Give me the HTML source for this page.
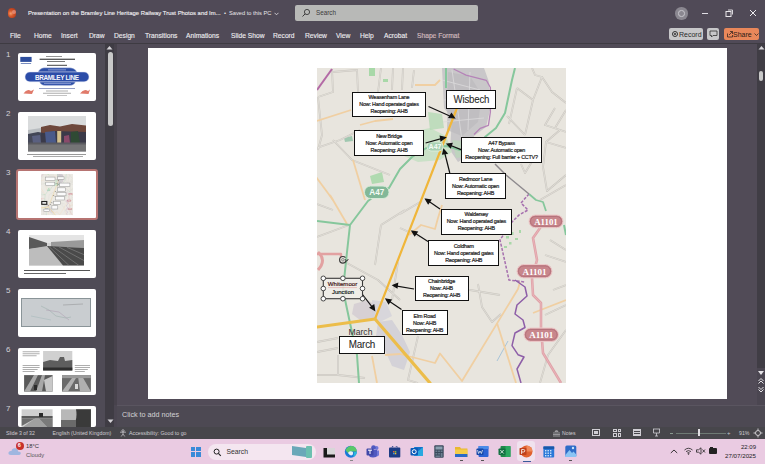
<!DOCTYPE html>
<html><head><meta charset="utf-8">
<style>
*{margin:0;padding:0;box-sizing:border-box}
html,body{width:765px;height:464px;overflow:hidden;background:#4b4651;font-family:"Liberation Sans",sans-serif}
.a{position:absolute}
.t{position:absolute;white-space:pre;line-height:1}
#title{left:0;top:0;width:765px;height:43px;background:#504a57}
#rline{left:0;top:42.8px;width:765px;height:1.7px;background:#3e3b42}
#lp{left:0;top:44px;width:105px;height:383px;background:#4f4b56}
#sbtrack{left:105px;top:44px;width:9px;height:383px;background:#3f3c44}
#sbthumb{left:107.5px;top:52px;width:5px;height:74px;background:#c9c9c9;border-radius:3px}
#sep{left:114px;top:44px;width:3px;height:361px;background:#47424c}
#work{left:117px;top:44px;width:640px;height:361px;background:#514b57}
#rsb{left:757px;top:44px;width:8px;height:324px;background:#403d45}
#slide{left:147.6px;top:47.5px;width:579.2px;height:351.6px;background:#fff}
#notes{left:117px;top:404.5px;width:648px;height:22.5px;background:#4d4953;border-top:1px solid #5a5560}
#status{left:0;top:427px;width:765px;height:12px;background:#47464b}
#task{left:0;top:439px;width:765px;height:25px;background:#eacbe2}
.thumb{position:absolute;left:18px;width:78px;height:48px;background:#fff;border-radius:2px}
.num{position:absolute;left:6px;color:#d4d2d8;font-size:8px;line-height:1}
.menu{position:absolute;top:33px;color:#eeedf0;font-size:6.7px;white-space:pre;line-height:1;-webkit-text-stroke:0.12px #eeedf0}
.bx{position:absolute;background:#fff;border:1.8px solid #111;padding-top:0.8px;display:flex;align-items:center;justify-content:center;text-align:center;font-size:5.4px;letter-spacing:-0.2px;line-height:7px;color:#1a1a1a;white-space:nowrap;-webkit-text-stroke:0.2px #222}
.bx.big{color:#262626;line-height:1;-webkit-text-stroke:0.08px #262626;padding-top:0}
</style></head>
<body>
<div class="a" id="title"></div>
<div class="a" id="rline"></div>
<div class="a" id="lp"></div>
<div class="a" id="sbtrack"></div>
<div class="a" id="sbthumb"></div>
<div class="a" id="sep"></div>
<div class="a" id="work"></div>
<div class="a" id="rsb"></div>
<div class="a" id="slide"></div>
<div class="a" id="notes"></div>
<div class="a" id="status"></div>
<div class="a" id="task"></div>

<!-- title bar -->
<div class="a" style="left:7.8px;top:8.3px;width:8.4px;height:9.6px;border-radius:45%;background:radial-gradient(circle at 35% 55%,#f4a070 0,#d85a2c 35%,#b8401e 70%,#8a3a38 100%)"></div><div class="a" style="left:11.5px;top:9.5px;width:4px;height:4px;border-radius:50%;background:#e89888;opacity:.7"></div>
<div class="t" style="left:28px;top:10.6px;font-size:5.9px;color:#f0eff2;-webkit-text-stroke:0.12px #f0eff2">Presentation on the Bramley Line Heritage Railway Trust Photos and Im...</div>
<div class="t" style="left:224px;top:10.8px;font-size:5.9px;color:#e8e6ea">•</div><div class="t" style="left:229px;top:11px;font-size:5.7px;color:#e8e6ea">Saved to this PC</div><svg class="a" style="left:274px;top:12px" width="5" height="4"><path d="M0.5 0.8 L2.5 2.8 L4.5 0.8" fill="none" stroke="#e8e6ea" stroke-width="0.8"/></svg>
<div class="a" style="left:295px;top:5px;width:183px;height:16px;background:#b8b9b7;border-radius:2px"></div>
<div class="t" style="left:316px;top:9.5px;font-size:6.3px;color:#3a3a3a">Search</div>

<!-- menu -->
<div class="menu" style="left:10px">File</div>
<div class="menu" style="left:34px">Home</div>
<div class="menu" style="left:61px">Insert</div>
<div class="menu" style="left:89px">Draw</div>
<div class="menu" style="left:114px">Design</div>
<div class="menu" style="left:145px">Transitions</div>
<div class="menu" style="left:186px">Animations</div>
<div class="menu" style="left:231px">Slide Show</div>
<div class="menu" style="left:273px">Record</div>
<div class="menu" style="left:305px">Review</div>
<div class="menu" style="left:336px">View</div>
<div class="menu" style="left:360px">Help</div>
<div class="menu" style="left:384px">Acrobat</div>
<div class="menu" style="left:417px;color:#c9a3a8">Shape Format</div>

<!-- thumbs -->
<div class="thumb" style="top:53px"></div>
<div class="thumb" style="top:112px"></div>
<div class="thumb" style="top:168.5px;left:16.2px;width:81.8px;height:51.8px;border:2px solid #b67472;border-radius:3px"></div>
<div class="thumb" style="top:230px"></div>
<div class="thumb" style="top:289px"></div>
<div class="thumb" style="top:348px;height:46.5px"></div>
<div class="thumb" style="top:406px;height:21px"></div>

<!-- map -->
<!-- thumb contents -->
<div class="num" style="top:51.3px">1</div>
<div class="num" style="top:110.3px">2</div>
<div class="num" style="top:169.3px">3</div>
<div class="num" style="top:228.3px">4</div>
<div class="num" style="top:287.3px">5</div>
<div class="num" style="top:346.3px">6</div>
<div class="num" style="top:405.3px">7</div>
<!-- t1 -->
<svg class="a" style="left:18px;top:53px" width="78" height="48" viewBox="18 53 78 48">
<rect x="20.3" y="56.9" width="11.3" height="5" fill="#2e4e9e"/>
<rect x="20.8" y="63" width="10.3" height="0.9" fill="#6a80b8"/>
<rect x="46" y="56.2" width="16" height="0.7" fill="#666"/>
<rect x="39.6" y="58.7" width="35.4" height="1.1" fill="#333"/>
<rect x="47" y="61" width="18" height="0.8" fill="#555"/>
<rect x="47" y="64.8" width="20" height="1" fill="#444"/>
<path d="M38 72 Q40 68 44 67.8 L70 67.8 Q75 68 77 72 Z" fill="#2d4ea6" stroke="#d8ddf0" stroke-width="0.4"/>
<path d="M39.5 81.8 L75.5 81.8 Q74 85.6 70 85.6 L45 85.6 Q41 85.6 39.5 81.8 Z" fill="#2d4ea6" stroke="#d8ddf0" stroke-width="0.4"/>
<rect x="25" y="72" width="64" height="9.8" rx="4.9" fill="#2b4ca8" stroke="#d8ddf0" stroke-width="0.5"/>
<rect x="48" y="69.4" width="18" height="0.9" fill="#8fa0d8"/>
<rect x="44" y="83.2" width="27" height="0.9" fill="#8fa0d8"/>
<text x="57" y="79.9" font-family="Liberation Sans" font-weight="bold" font-size="6.4" fill="#f4f6fc" text-anchor="middle" textLength="44">BRAMLEY LINE</text>
<rect x="39" y="88.2" width="36" height="0.8" fill="#7a88b8"/>
<rect x="46" y="90.6" width="22" height="0.8" fill="#999"/>
<rect x="43" y="92.8" width="28" height="0.8" fill="#999"/>
<rect x="47" y="95" width="20" height="0.7" fill="#aaa"/>
<path d="M23.5 93.5 Q27 88 31 91 L34 89.5 L32 94 Z" fill="#e07a6a"/>
<path d="M80 93.5 Q84 88 88 91 L90 89.5 L88.5 94 Z" fill="#e07a6a"/>
</svg>
<!-- t2 photo -->
<svg class="a" style="left:28px;top:116px" width="58.4" height="35.6" viewBox="0 0 58.4 35.6">
<rect width="58.4" height="35.6" fill="#d9dbdc"/>
<path d="M13 11 L22 9 L32 10.5 L44 8 L58.4 9.5 L58.4 27 L13 27 Z" fill="#6e483c"/>
<path d="M0 14 L13 12 L13 20 L0 20 Z" fill="#b8bcc0"/>
<path d="M0 18 L10 16 L16 17 L26 15 L58.4 16 L58.4 28 L0 28 Z" fill="#35384a" opacity="0.9"/>
<path d="M17 16 L27 15 L28 27 L18 27 Z" fill="#4a5a8a"/>
<path d="M4 20 L12 19 L13 27 L5 27 Z" fill="#5a6080"/>
<rect x="29.2" y="15" width="4" height="13" fill="#d4c08c"/>
<path d="M36 20 L41 19 L42 27 L36 27 Z" fill="#8a4a6a"/>
<path d="M43 16 L50 15 L52 27 L43 27 Z" fill="#2f4a34"/>
<rect x="0" y="28" width="58.4" height="7.6" fill="#747476"/>
<rect x="0" y="26.5" width="58.4" height="2" fill="#5a5a60"/>
</svg>
<div class="a" style="left:27px;top:153.5px;width:59px;height:0.8px;background:#999"></div>
<div class="a" style="left:33px;top:155.5px;width:50px;height:0.8px;background:#aaa"></div>
<!-- t3 map -->
<svg class="a" style="left:41.2px;top:174.4px" width="32" height="41.3" viewBox="317 68 249 315" preserveAspectRatio="none"><use href="#mapg" opacity="0.8"/><rect x="352.0" y="91.5" width="74.0" height="25.0" fill="#fbfbfb" stroke="#999" stroke-width="4"/><rect x="354.0" y="130.3" width="70.2" height="26.0" fill="#fbfbfb" stroke="#999" stroke-width="4"/><rect x="461.4" y="137.2" width="80.4" height="25.5" fill="#fbfbfb" stroke="#999" stroke-width="4"/><rect x="445.4" y="173.4" width="60.4" height="26.0" fill="#fbfbfb" stroke="#999" stroke-width="4"/><rect x="441.1" y="208.5" width="70.5" height="26.0" fill="#fbfbfb" stroke="#999" stroke-width="4"/><rect x="428.2" y="240.2" width="71.1" height="26.0" fill="#fbfbfb" stroke="#999" stroke-width="4"/><rect x="414.5" y="275.5" width="54.0" height="25.0" fill="#fbfbfb" stroke="#999" stroke-width="4"/><rect x="401.6" y="310.2" width="46.0" height="25.0" fill="#fbfbfb" stroke="#999" stroke-width="4"/><rect x="446.3" y="89.8" width="50.2" height="19.0" fill="#fbfbfb" stroke="#999" stroke-width="4"/><rect x="339.4" y="335.7" width="45.4" height="18.7" fill="#fbfbfb" stroke="#999" stroke-width="4"/><rect x="323" y="278" width="39" height="21" fill="#fff" stroke="#222" stroke-width="9"/></svg>
<!-- t4 -->
<svg class="a" style="left:28.6px;top:235.4px" width="55.8" height="30.5" viewBox="0 0 55.8 30.5">
<rect width="55.8" height="30.5" fill="#d4d4d4"/>
<rect width="55.8" height="8" fill="#e4e4e4"/>
<path d="M0 2 L18 8 L18 12 L0 14 Z" fill="#5a5a5a"/>
<path d="M22 7 L55.8 5 L55.8 13 L22 12 Z" fill="#9a9a9a"/>
<path d="M0 14 L18 11 L34 30.5 L0 30.5 Z" fill="#bdbdbd"/>
<path d="M18 11 L55.8 13 L55.8 30.5 L34 30.5 Z" fill="#4a4a4a"/>
<path d="M20 11.5 L40 30.5 M24 11.8 L50 30.5 M30 12 L55.8 26 M38 12.4 L55.8 20" stroke="#8a8a8a" stroke-width="0.6"/>
</svg>
<div class="a" style="left:24px;top:269.5px;width:66px;height:1px;background:#555"></div>
<div class="a" style="left:24px;top:273px;width:42px;height:1px;background:#666"></div>
<!-- t5 -->
<div class="a" style="left:20.5px;top:298px;width:70.8px;height:28.6px;background:#c9cdd0;border:0.6px solid #8a9498"></div>
<svg class="a" style="left:20.5px;top:298px" width="70.8" height="28.6"><g fill="none" stroke-width="0.5" opacity="0.6"><path d="M20 8 L28 12 L35 18 L45 20 L50 19" stroke="#7a9a90"/><path d="M25 12 L38 14 L48 22" stroke="#9a7a9a"/><path d="M42 7 L62 6" stroke="#666"/><path d="M10 18 L30 22" stroke="#8aa"/></g></svg>
<!-- t6 -->
<svg class="a" style="left:18px;top:348px" width="78" height="79" viewBox="18 348 78 79">
<g fill="#9a9a9a"><rect x="22.6" y="351.4" width="17" height="0.8"/><rect x="22.6" y="353.4" width="17" height="0.8"/><rect x="22.6" y="355.4" width="14" height="0.8"/>
<rect x="22.6" y="365" width="17" height="0.8"/><rect x="22.6" y="367" width="17" height="0.8"/><rect x="22.6" y="369" width="15" height="0.8"/><rect x="22.6" y="371" width="12" height="0.8"/>
<rect x="74.8" y="365" width="15.2" height="0.8"/><rect x="74.8" y="367" width="15.2" height="0.8"/><rect x="74.8" y="369" width="13" height="0.8"/><rect x="74.8" y="371" width="10" height="0.8"/></g>
<rect x="43.1" y="351" width="29.2" height="19.4" fill="#d0d0d0"/>
<path d="M43.1 362 L50 360 L58 361 L60 357 L64 357 L65 361 L72.3 360 L72.3 370.4 L43.1 370.4 Z" fill="#5e5e5e"/>
<rect x="43.1" y="367.5" width="29.2" height="2.9" fill="#2e2e2e"/>
<rect x="24.1" y="375.1" width="28.5" height="16.5" fill="#5a5a5a"/>
<path d="M24.1 391.6 L34 375.1 L38 375.1 L30 391.6 Z M36 391.6 L42 375.1 L45 375.1 L42 391.6 Z" fill="#a8a8a8"/>
<path d="M44 380 L52.6 376 L52.6 391.6 L46 391.6 Z" fill="#c8c8c8"/>
<rect x="34" y="385" width="3" height="5" fill="#2a2a2a"/>
<rect x="62" y="375.1" width="28.9" height="16.5" fill="#6a6a6a"/>
<path d="M62 391.6 L72 378 L76 378 L68 391.6 Z M80 391.6 L78 376 L82 376 L90.9 391.6 Z" fill="#b0b0b0"/>
<rect x="75" y="384" width="3" height="5" fill="#dadada"/>
<rect x="62" y="375.1" width="28.9" height="3" fill="#9a9a9a"/>
<!-- t7 -->
<rect x="21.6" y="409.3" width="31" height="20" fill="#cfcfcf"/>
<rect x="21.6" y="416" width="31" height="2.5" fill="#5a5a5a"/>
<rect x="39" y="413" width="4" height="4" fill="#2a2a2a"/>
<path d="M21.6 428 L35 418.5 L39 418.5 L48 428 Z" fill="#a0a0a0"/>
<path d="M21.6 418.5 L35 418.5 L21.6 426 Z" fill="#6e6e6e"/>
<path d="M39 418.5 L52.6 418.5 L52.6 428 L48 428 Z" fill="#7a7a7a"/>
<rect x="61" y="409.3" width="29.9" height="20" fill="#b8b8b8"/>
<path d="M76 409.3 L90.9 409.3 L90.9 428 L72 428 Q78 420 76 409.3 Z" fill="#3a3a3a"/>
<rect x="61" y="420" width="15" height="8" fill="#6a6a6a"/>
</svg>
<!-- title right controls -->
<div class="a" style="left:675px;top:7px;width:12.5px;height:12.5px;border-radius:50%;background:#8a8790"></div>
<div class="a" style="left:678px;top:10px;width:6.5px;height:6.5px;border-radius:50%;border:1px solid #c8c6cc"></div>
<div class="a" style="left:701.5px;top:12.8px;width:6.5px;height:1px;background:#e0dee4"></div>
<svg class="a" style="left:725px;top:9px" width="9" height="9"><rect x="1" y="2.5" width="5" height="5" fill="none" stroke="#e8e6ea" stroke-width="1"/><path d="M3 1 L7.5 1 L7.5 5.5" fill="none" stroke="#e8e6ea" stroke-width="0.9"/></svg>
<svg class="a" style="left:749px;top:9px" width="8" height="8"><path d="M1 1 L7 7 M7 1 L1 7" stroke="#ecebee" stroke-width="1"/></svg>
<!-- search icon -->
<svg class="a" style="left:301px;top:8px" width="10" height="10"><circle cx="6" cy="4" r="2.6" fill="none" stroke="#3a3a3a" stroke-width="0.9"/><path d="M4.2 5.8 L1.5 8.5" stroke="#3a3a3a" stroke-width="1"/></svg>
<!-- record/comment/share -->
<div class="a" style="left:669px;top:28px;width:34px;height:12px;background:#c7c7c9;border-radius:2px"></div>
<div class="a" style="left:672px;top:31px;width:6px;height:6px;border-radius:50%;border:1px solid #333"></div>
<div class="a" style="left:674px;top:33px;width:2px;height:2px;border-radius:50%;background:#333"></div>
<div class="t" style="left:679px;top:31px;font-size:7px;color:#2a2a2a">Record</div>
<div class="a" style="left:707px;top:28px;width:12px;height:12px;background:#c7c7c9;border-radius:2px"></div>
<svg class="a" style="left:709px;top:30px" width="9" height="8"><path d="M1 1 L8 1 L8 5.5 L4 5.5 L2.5 7 L2.5 5.5 L1 5.5 Z" fill="none" stroke="#333" stroke-width="0.8"/></svg>
<div class="a" style="left:723.5px;top:28px;width:35.5px;height:12px;background:#e8875a;border-radius:2px"></div>
<svg class="a" style="left:726px;top:30px" width="8" height="8"><path d="M1.5 3.5 L1.5 7 L6.5 7 L6.5 5 M3 5 L6.5 1.5 M4 1.5 L6.5 1.5 L6.5 4" fill="none" stroke="#3a2a22" stroke-width="0.8"/></svg>
<div class="t" style="left:733px;top:31px;font-size:7px;color:#2a1a14">Share</div>
<svg class="a" style="left:754px;top:33px" width="5" height="3"><path d="M0.5 0.5 L2.5 2.5 L4.5 0.5" fill="none" stroke="#3a2a22" stroke-width="0.8"/></svg>
<!-- scroll arrows -->
<svg class="a" style="left:106px;top:45px" width="7" height="5"><path d="M0.5 4.5 L3.5 1 L6.5 4.5 Z" fill="#d6d4d8"/></svg>
<svg class="a" style="left:107px;top:419px" width="7" height="5"><path d="M0.5 0.5 L3.5 4 L6.5 0.5 Z" fill="#d6d4d8"/></svg>
<div class="a" style="left:759px;top:71px;width:4px;height:10px;background:#c9c9c9;border-radius:2px"></div>
<svg class="a" style="left:758px;top:45px" width="7" height="5"><path d="M0.5 4.5 L3.5 1 L6.5 4.5 Z" fill="#d6d4d8"/></svg>
<!-- status bar texts -->
<div class="t" style="left:6px;top:430.5px;font-size:5.2px;color:#cfcdd2">Slide 3 of 32</div>
<div class="t" style="left:52.5px;top:430.5px;font-size:5.2px;color:#cfcdd2">English (United Kingdom)</div>
<svg class="a" style="left:119px;top:428.5px" width="8" height="8"><circle cx="4" cy="1.8" r="1.1" fill="none" stroke="#d0ced4" stroke-width="0.7"/><path d="M1 3.2 L7 3.2 M4 3.2 L4 5 L2.2 7.5 M4 5 L5.8 7.5" fill="none" stroke="#d0ced4" stroke-width="0.7"/></svg>
<div class="t" style="left:129px;top:430.5px;font-size:5.25px;color:#cfcdd2">Accessibility: Good to go</div>
<svg class="a" style="left:552px;top:428.5px" width="9" height="8"><path d="M4.5 1 L6 2.5 L3 2.5 Z M1 4 L8 4 M1 5.5 L8 5.5 M1 7 L8 7" fill="none" stroke="#cfcdd2" stroke-width="0.6"/></svg>
<div class="t" style="left:562px;top:430.5px;font-size:5.2px;color:#cfcdd2">Notes</div>
<div class="a" style="left:592px;top:428.5px;width:8px;height:7.5px;border:1px solid #d0ced4"></div>
<div class="a" style="left:594px;top:430.5px;width:4px;height:3px;background:#d0ced4"></div>
<div class="a" style="left:613px;top:428.5px;width:3.5px;height:3.5px;border:0.8px solid #d0ced4"></div>
<div class="a" style="left:617.5px;top:428.5px;width:3.5px;height:3.5px;border:0.8px solid #d0ced4"></div>
<div class="a" style="left:613px;top:433px;width:3.5px;height:3.5px;border:0.8px solid #d0ced4"></div>
<div class="a" style="left:617.5px;top:433px;width:3.5px;height:3.5px;border:0.8px solid #d0ced4"></div>
<div class="a" style="left:633px;top:428.5px;width:8px;height:7.5px;border:1px solid #d0ced4;background:repeating-linear-gradient(#d0ced4 0 1px,transparent 1px 2px)"></div>
<svg class="a" style="left:652px;top:428px" width="9" height="9"><path d="M1 1 L8 1 M1.5 1 L1.5 5 L7.5 5 L7.5 1 M4.5 5 L4.5 8 M3 8 L6 8" fill="none" stroke="#d0ced4" stroke-width="0.8"/></svg>
<div class="a" style="left:670px;top:433px;width:3px;height:0.8px;background:#8a9a90"></div>
<div class="a" style="left:676px;top:433px;width:50px;height:0.8px;background:#6e7a74"></div>
<div class="a" style="left:697.5px;top:429px;width:2px;height:7px;background:#e0dee2"></div>
<div class="t" style="left:727px;top:429.5px;font-size:6px;color:#c8c6cc">+</div>
<div class="t" style="left:739px;top:430.5px;font-size:5.2px;color:#cfcdd2">91%</div>
<svg class="a" style="left:753px;top:428px" width="10" height="10"><circle cx="5" cy="5" r="2.5" fill="none" stroke="#d8d6da" stroke-width="0.9"/><path d="M5 0.5 L5 2.5 M5 7.5 L5 9.5 M0.5 5 L2.5 5 M7.5 5 L9.5 5" stroke="#d8d6da" stroke-width="0.9"/></svg>
<!-- taskbar -->
<svg class="a" style="left:8px;top:445px" width="14" height="12"><path d="M3 10 Q0 10 0.5 7.5 Q1 5.5 3.5 6 Q4 3 7 3.2 Q10 3.4 10 6.5 Q13 6.5 12.8 8.5 Q12.5 10 10.5 10 Z" fill="#9fb6e0"/></svg>
<div class="a" style="left:15.5px;top:441.5px;width:8px;height:8px;border-radius:50%;background:#c8302a"></div>
<div class="t" style="left:17.7px;top:443px;font-size:5.5px;color:#fff;font-weight:bold">6</div>
<div class="t" style="left:26px;top:444px;font-size:5.8px;color:#333">18°C</div>
<div class="t" style="left:26px;top:452.5px;font-size:5.8px;color:#555">Cloudy</div>
<!-- windows logo -->
<div class="a" style="left:190.5px;top:446.5px;width:4.6px;height:4.6px;background:#3a8ad8"></div>
<div class="a" style="left:196.4px;top:446.5px;width:4.6px;height:4.6px;background:#3a8ad8"></div>
<div class="a" style="left:190.5px;top:452.4px;width:4.6px;height:4.6px;background:#3a8ad8"></div>
<div class="a" style="left:196.4px;top:452.4px;width:4.6px;height:4.6px;background:#3a8ad8"></div>
<!-- search -->
<div class="a" style="left:208px;top:444px;width:108px;height:16px;background:#f4e6f0;border-radius:8px"></div>
<svg class="a" style="left:213px;top:448px" width="9" height="9"><circle cx="3.6" cy="3.6" r="2.5" fill="none" stroke="#222" stroke-width="1"/><path d="M5.4 5.4 L7.8 7.8" stroke="#222" stroke-width="1.1"/></svg>
<div class="t" style="left:226.5px;top:448.5px;font-size:6.8px;color:#333">Search</div>
<div class="a" style="left:292px;top:447px;width:14px;height:9px;background:#6aa8b8;transform:skewY(8deg)"></div>
<div class="a" style="left:306px;top:446px;width:6px;height:12px;background:#6cc0b0;border-radius:1px"></div>
<!-- app icons -->
<svg class="a" style="left:323px;top:448px" width="13" height="10"><rect x="0.5" y="0" width="11.5" height="9.5" fill="#1a1a1a"/><rect x="4" y="0" width="8" height="6.5" fill="#d8d6d8"/></svg>
<svg class="a" style="left:344px;top:445px" width="14" height="14"><circle cx="6.8" cy="6.8" r="6" fill="#1a78d8"/><path d="M1.5 5 Q4 0.5 8 1 Q12.5 1.5 12.8 6.5 L7 6.5 Q5 6.5 4.5 8.5 Q3 7 1.5 5 Z" fill="#5ac86a"/><path d="M4 8 Q5 5.5 8 6.5 Q10 7 8.5 10 Q6 11.5 4 8 Z" fill="#e8eef6"/><path d="M9 12 Q12.5 10.5 12.8 7 L10 7 Q10 10 9 12 Z" fill="#2ab8d8"/></svg>
<div class="a" style="left:350px;top:459.5px;width:3px;height:1px;background:#888"></div>
<svg class="a" style="left:366px;top:445px" width="14" height="13"><circle cx="10.5" cy="3" r="2" fill="#7078d8"/><path d="M8 5.5 L13 5.5 L13 9.5 Q13 11.5 10.5 11.5 Q8 11.5 8 9.5 Z" fill="#7078d8"/><circle cx="7.5" cy="2.5" r="2.3" fill="#5059c0"/><path d="M3 5 L11 5 L11 10 Q11 12.5 7 12.5 Q3 12.5 3 10 Z" fill="#5059c0"/><rect x="0.5" y="3.5" width="7" height="7" rx="1" fill="#4048a8"/><path d="M2 5.2 L6 5.2 M4 5.2 L4 9" stroke="#fff" stroke-width="1"/></svg>
<svg class="a" style="left:389px;top:446px" width="12" height="12"><rect x="0" y="1.5" width="11.3" height="10" rx="1" fill="#1c3c84"/><path d="M3 1.5 Q3 -0.5 5.6 -0.5 Q8.3 -0.5 8.3 1.5" fill="none" stroke="#1c3c84" stroke-width="0.8"/><rect x="4" y="5" width="1.5" height="1.5" fill="#e85a30"/><rect x="5.8" y="5" width="1.5" height="1.5" fill="#6ac04a"/><rect x="4" y="6.8" width="1.5" height="1.5" fill="#3a9ae0"/><rect x="5.8" y="6.8" width="1.5" height="1.5" fill="#f0c02a"/></svg>
<svg class="a" style="left:410px;top:445px" width="14" height="13"><path d="M4 2 L13 2 L13 11 L4 11 Z" fill="#28a8e0"/><path d="M4 2 L13 2 L8.5 6 Z" fill="#1470c8"/><rect x="0.5" y="3" width="7.5" height="7.5" rx="1" fill="#0a5ab8"/><circle cx="4.2" cy="6.7" r="2" fill="none" stroke="#fff" stroke-width="1"/></svg>
<svg class="a" style="left:433.5px;top:445px" width="10" height="13"><rect x="0.3" y="0.3" width="9.4" height="12.5" rx="1" fill="#3a4a5c"/><rect x="1.5" y="1.5" width="7" height="3" fill="#8aa0b0"/><g fill="#6a7e90"><rect x="1.5" y="5.5" width="1.8" height="1.5"/><rect x="4.1" y="5.5" width="1.8" height="1.5"/><rect x="6.7" y="5.5" width="1.8" height="1.5"/><rect x="1.5" y="8" width="1.8" height="1.5"/><rect x="4.1" y="8" width="1.8" height="1.5"/><rect x="6.7" y="8" width="1.8" height="4"/><rect x="1.5" y="10.5" width="4.4" height="1.5"/></g></svg>
<svg class="a" style="left:455px;top:446px" width="13" height="12"><path d="M0 1 L5 1 L6 2.5 L12.4 2.5 L12.4 11 L0 11 Z" fill="#e8b830"/><rect x="0" y="3.5" width="12.4" height="7.5" fill="#f4cc48"/><rect x="0" y="8" width="12.4" height="3" fill="#2a6ac8"/></svg>
<div class="a" style="left:459.5px;top:460px;width:3px;height:1px;background:#555"></div>
<svg class="a" style="left:476px;top:445px" width="13" height="13"><rect x="2.5" y="1" width="10" height="11" rx="1" fill="#2b62d4"/><rect x="2.5" y="1" width="10" height="3" fill="#4a8ae8"/><rect x="0.5" y="3.5" width="7" height="6.5" rx="0.8" fill="#1648a8"/><path d="M1.5 5 L2.6 8.5 L4 6 L5.4 8.5 L6.5 5" fill="none" stroke="#fff" stroke-width="0.7"/></svg>
<div class="a" style="left:480.5px;top:460px;width:3px;height:1px;background:#555"></div>
<svg class="a" style="left:497.5px;top:445px" width="13" height="13"><rect x="2.5" y="1" width="10" height="11" rx="1" fill="#1f8a4a"/><rect x="7.5" y="1" width="5" height="11" fill="#2aa860"/><rect x="0.5" y="3.5" width="7" height="6.5" rx="0.8" fill="#107040"/><path d="M2.3 5 L5.7 8.5 M5.7 5 L2.3 8.5" stroke="#fff" stroke-width="0.8"/></svg>
<div class="a" style="left:516.8px;top:441.4px;width:18.7px;height:20px;background:#f0e2ee;border-radius:3px"></div>
<svg class="a" style="left:518.5px;top:445px" width="14" height="13"><circle cx="7.5" cy="6.5" r="6" fill="#e0602e"/><path d="M7.5 0.5 A6 6 0 0 1 13.5 6.5 L7.5 6.5 Z" fill="#f08a5a"/><rect x="0.5" y="3" width="7" height="7" rx="0.8" fill="#c0401a"/><path d="M2.6 9 L2.6 4.5 L4.5 4.5 Q5.8 4.5 5.8 5.8 Q5.8 7 4.5 7 L2.6 7" fill="none" stroke="#fff" stroke-width="0.8"/></svg>
<div class="a" style="left:522.5px;top:460.5px;width:8px;height:1.2px;background:#3a5a9a"></div>
<svg class="a" style="left:543px;top:445.5px" width="12" height="12"><rect x="0.4" y="0.4" width="10.8" height="11.2" rx="1" fill="#2a78d8"/><rect x="0.4" y="0.4" width="10.8" height="2.5" fill="#1a58a8"/><g fill="#d0e4fa"><rect x="2" y="4" width="1.4" height="1.4"/><rect x="4.5" y="4" width="1.4" height="1.4"/><rect x="7" y="4" width="1.4" height="1.4"/><rect x="2" y="6.5" width="1.4" height="1.4"/><rect x="4.5" y="6.5" width="1.4" height="1.4"/><rect x="7" y="6.5" width="1.4" height="1.4"/><rect x="2" y="9" width="1.4" height="1.4"/><rect x="4.5" y="9" width="1.4" height="1.4"/><rect x="7" y="9" width="1.4" height="1.4"/></g></svg>
<svg class="a" style="left:564.5px;top:445px" width="12" height="13"><rect x="0.3" y="0.5" width="11" height="11.5" rx="1.5" fill="#2e6cc8"/><path d="M0.3 10 L4.5 5 L7 8 L8.5 6.5 L11.3 9.5 L11.3 12 L0.3 12 Z" fill="#8ac4f4"/><circle cx="8" cy="3" r="1.2" fill="#c8e4fa"/></svg>
<div class="a" style="left:568.5px;top:460px;width:3px;height:1px;background:#555"></div>
<!-- tray -->
<svg class="a" style="left:670px;top:449px" width="8" height="5"><path d="M0.8 4 L4 1 L7.2 4" fill="none" stroke="#222" stroke-width="0.9"/></svg>
<svg class="a" style="left:684px;top:447px" width="9" height="8"><path d="M0.5 3 Q4.5 -0.5 8.5 3 M2 4.6 Q4.5 2.6 7 4.6 M3.3 6 Q4.5 5 5.7 6" fill="none" stroke="#222" stroke-width="0.8"/><circle cx="4.5" cy="7" r="0.7" fill="#222"/></svg>
<svg class="a" style="left:696px;top:447px" width="10" height="8"><path d="M0.5 2.8 L2.5 2.8 L5 0.8 L5 7.2 L2.5 5.2 L0.5 5.2 Z" fill="none" stroke="#222" stroke-width="0.8"/><path d="M6.5 2.5 L9 5.5 M9 2.5 L6.5 5.5" stroke="#222" stroke-width="0.8"/></svg>
<div class="a" style="left:708.5px;top:448px;width:8px;height:6px;background:#222;border-radius:1px"></div>
<div class="a" style="left:710px;top:446.5px;width:3px;height:1.5px;background:#222"></div>
<div class="t" style="left:741px;top:443.5px;font-size:6px;color:#222">22:09</div>
<div class="t" style="left:725px;top:452.5px;font-size:6.2px;color:#222">27/07/2025</div>

<svg class="a" style="left:757px;top:369px" width="8" height="25"><path d="M1 2 L7 2 L4 6 Z" fill="#e4e2e6"/><path d="M1.5 12 L4 9.5 L6.5 12 M1.5 14.5 L4 12 L6.5 14.5" fill="none" stroke="#e4e2e6" stroke-width="1"/><path d="M1.5 18 L4 20.5 L6.5 18 M1.5 20.5 L4 23 L6.5 20.5" fill="none" stroke="#e4e2e6" stroke-width="1"/></svg>
<!-- MAP -->
<svg class="a" style="left:317px;top:68px" width="249" height="315" viewBox="317 68 249 315">
<defs><clipPath id="mc"><rect x="317" y="68" width="249" height="315"/></clipPath></defs>
<g id="mapg" clip-path="url(#mc)">
<rect x="317" y="68" width="249" height="315" fill="#e8e5de"/>
<!-- town areas -->
<path d="M442 68 L484 68 L489 82 L490 110 L486 127 L474 136 L470 155 L458 162 L450 150 L452 118 L444 108 Z" fill="#c9c7c9"/>
<path d="M448 72 L470 76 L482 95 L478 122 L462 136 L447 130 Z" fill="#bcbabd" opacity="0.7"/>
<g stroke="#dcdadc" stroke-width="0.8" fill="none"><path d="M442 80 L480 90"/><path d="M444 100 L486 96"/><path d="M452 70 L462 140"/><path d="M470 72 L468 130"/><path d="M442 122 L484 118"/></g>
<path d="M354 304 L368 300 L376 306 L374 318 L360 320 L352 314 Z" fill="#d4cdd2" opacity="0.85"/><path d="M372 300 L386 302 L392 316 L380 322 L372 316 Z" fill="#d2d0da" opacity="0.7"/>
<path d="M378 322 L392 320 L402 335 L410 352 L404 370 L392 366 L384 348 L376 336 Z" fill="#cdcbd6" opacity="0.75"/>
<!-- parks -->
<path d="M412 132 L430 128 L446 136 L452 152 L440 160 L418 162 L404 156 Z" fill="#c6e0c4" opacity="0.9"/><path d="M428 112 L442 114 L444 128 L430 130 Z" fill="#b4dab4" opacity="0.8"/><path d="M452 140 L470 142 L472 156 L456 158 Z" fill="#b8dcb8" opacity="0.6"/>
<rect x="369" y="68" width="6" height="8" fill="#a8d8a8"/>
<rect x="383" y="79" width="5" height="3" fill="#a8d8a8"/>
<path d="M370 176 L382 172 L384 182 L372 184 Z" fill="#b0dab0"/>
<g fill="#a8d8a8"><rect x="506" y="236" width="3" height="2.5"/><rect x="511" y="232" width="2.5" height="3"/><rect x="515" y="238" width="3" height="2"/><rect x="509" y="242" width="2.5" height="2.5"/><rect x="519" y="230" width="2" height="3"/><rect x="504" y="246" width="3" height="2"/></g>
<path d="M344 138 L352 136 L353 141 L345 142 Z" fill="#a0c8b0"/>
<!-- minor roads gray -->
<defs><g id="minor">
<path d="M332 69 L333 92 L318 97"/>
<path d="M333 72 L357 70 L358 92"/>
<path d="M318 97 L322 135 L318 150"/>
<path d="M381 68 L378 92"/><path d="M393 68 L392 90"/><path d="M403 68 L402 90"/><path d="M414 70 L412 88"/>
<path d="M532 68 L535 75 L542 77 L533 100 L525 135"/>
<path d="M517 88 L533 100"/><path d="M517 88 L509 124"/>
<path d="M542 77 L552 92 L566 103"/>
<path d="M555 108 L545 125 L566 132"/>
<path d="M507 116 L525 135"/>
<path d="M546 142 L566 148"/><path d="M543 167 L547 191 L566 175"/><path d="M560 130 L546 142 L543 167"/>
<path d="M521 164 L525 173 L533 160"/><path d="M540 200 L566 185"/>
<path d="M317 148 L340 140 L360 130"/><path d="M333 140 L352 160 L390 175"/>
<path d="M317 204 L333 210"/><path d="M317 237 L349 225"/>
<path d="M381 225 L375 265"/><path d="M381 225 L405 210"/>
<path d="M400 214 L422 201"/><path d="M400 228 L420 237"/>
<path d="M345 262 L378 280 L400 300"/><path d="M398 262 L392 300"/>
<path d="M317 342 L338 338"/><path d="M317 352 L338 348"/><path d="M317 375 L338 375 L365 378"/>
<path d="M338 355 L338 375"/>
<path d="M418 336 L408 380 L418 383"/>
<path d="M430 300 L470 290 L500 295"/>
<path d="M478 284 L482 307 L492 322 L501 314"/>
<path d="M550 240 L566 250"/><path d="M545 255 L566 262"/>
<path d="M553 290 L566 285"/><path d="M545 315 L566 305"/>
<path d="M566 330 L548 355 L540 383"/>
<path d="M555 128 L566 110"/>
</g></defs>
<use href="#minor" fill="none" stroke="#c8c4bd" stroke-width="1.8" stroke-linejoin="round"/>
<use href="#minor" fill="none" stroke="#eeece7" stroke-width="0.6" stroke-linejoin="round"/>
<path d="M508 341 L497 361" fill="none" stroke="#a8c4d8" stroke-width="1"/>
<!-- dark road -->
<path d="M495 164 L506 175 L529 194" fill="none" stroke="#8e8a8e" stroke-width="1.5"/>
<!-- tan roads -->
<g fill="none" stroke="#f0cfa2" stroke-width="1.8" stroke-linejoin="round">
<path d="M317 121 L351 110"/><path d="M360 125 L375 121 L393 119"/>
<path d="M415 85 L435 85 L440 80"/>
<path d="M316 177 L333 200"/>
<path d="M353 160 L365 200"/><path d="M330 195 L347 224"/>
<path d="M409 235 L421 225 L435 229 L438 218 L442 205"/>
<path d="M385 355 L400 354 L435 363 L440 353.5 L462 381 L518 289 L520 282"/>
<path d="M497 323 L516 383"/>
<path d="M533 313 L566 300"/>
<path d="M372 356 L377 383"/>
</g>
<!-- pink road -->
<g fill="none" stroke="#e2a1a1" stroke-width="2.4" stroke-linejoin="round">
<path d="M545 215 L540 228 L533 238 L537 260 L532 278 L533 295 L541 303 L541 328 L543 353 L561 383" stroke="#e0a2a8" stroke-width="2.6"/><path d="M545 215 L540 228 L533 238 L537 260 L532 278 L533 295 L541 303 L541 328 L543 353 L561 383" stroke="#eab8bc" stroke-width="0.8"/>
<path d="M317 254 L341 254 L341 257"/>
<path d="M318 252 Q327 260 318 270" stroke-width="3"/>
</g>
<!-- purple boundary -->
<g fill="none" stroke="#a56fae" stroke-width="1.5" stroke-linejoin="round">
<path d="M332 69 L317 90" stroke="#b36aa5" stroke-width="2"/>
<path d="M453.6 69 L466 75.2 L486.3 80.3 L490.4 87.5 L490.4 112 L488.4 125.3 L480.2 128.4 L474 134.5" stroke="#b584b8" stroke-width="1.3"/>
<path d="M529 194 L521 203 L528 210 L519 215 L512 222 L500 240 L505 262 L509 280 L525 282" stroke-dasharray="3 1.5"/>
<path d="M515 280 L525 287 L527 296 L517 305 L515 314 L523 320 L525 327.5 L515 333 L512 345.6 L518 354.7 L524 357 L517 369 L521 383" stroke="#8e5fa8"/>
</g>
<!-- green trunk -->
<g fill="none" stroke="#86c79c" stroke-width="2" stroke-linejoin="round">
<path d="M515 68 L512 80 L505 113 L496 128 L485 137 L475 150"/>
<path d="M446 68 L446 88"/>
<path d="M475 150 L460 150 L447 146 L428 147 L412 157 L400 169 L389 188 L376 195 L368 201 L350 225 L347 252 L343 290 L350 323 L357 355 L359 383"/>
<path d="M350 225 L317 221"/>
<path d="M529 194 L536 200 L543 202 L546 211" stroke-width="1.8"/><path d="M564 225 L566 235"/>
</g>
<!-- railway -->
<g fill="none" stroke-linecap="round" stroke-linejoin="round">
<path d="M457 108 L375 319" stroke-width="2.2" stroke="#f0b63a"/>
<path d="M317 327 L375 319 L430 383" stroke-width="3.2" stroke="#ecbd4a"/>
</g>
<!-- shields -->
<g font-family="Liberation Sans" font-weight="bold" text-anchor="middle">
<rect x="364.5" y="186" width="24.5" height="12.5" rx="6" fill="#82b898" stroke="#d6ecd8" stroke-width="1"/>
<text x="376.8" y="195.3" font-size="8.2" fill="#f4fbf5">A47</text>
<rect x="427" y="142" width="16" height="9" rx="4" fill="#a8d0b2" stroke="#e0f0e0" stroke-width="0.8"/>
<text x="435" y="149.3" font-size="7" fill="#f4fbf5">A47</text>
</g>
<g font-family="Liberation Serif" font-weight="bold" text-anchor="middle">
<rect x="529" y="215" width="34" height="12.7" rx="6.3" fill="#c8868c" stroke="#eccaca" stroke-width="1"/>
<rect x="530.5" y="216.5" width="31" height="9.7" rx="4.8" fill="none" stroke="#a86470" stroke-width="0.6"/>
<text x="546" y="224.6" font-size="8.8" fill="#fff">A1101</text>
<rect x="517" y="264.5" width="35" height="13.4" rx="6.7" fill="#c8868c" stroke="#eccaca" stroke-width="1"/>
<rect x="518.5" y="266" width="32" height="10.4" rx="5.2" fill="none" stroke="#a86470" stroke-width="0.6"/>
<text x="534.5" y="274.6" font-size="9" fill="#fff">A1101</text>
<rect x="524" y="328" width="34.5" height="13.4" rx="6.7" fill="#c8868c" stroke="#eccaca" stroke-width="1"/>
<rect x="525.5" y="329.5" width="31.5" height="10.4" rx="5.2" fill="none" stroke="#a86470" stroke-width="0.6"/>
<text x="541.2" y="338.1" font-size="9" fill="#fff">A1101</text>
</g>
<text x="360.5" y="334.5" font-family="Liberation Sans" font-size="8.6" fill="#363436" text-anchor="middle">March</text>
<!-- arrows -->
<g stroke="#111" stroke-width="1.2" fill="#111">
<path d="M428.5 106.5 L452 117"/><path d="M454.5 118 L449 117.5 L451.5 113.5 Z"/>
<path d="M425.6 143 L443 138.2"/><path d="M445.5 137.6 L441 140.8 L440.3 136.2 Z"/>
<path d="M461 149.6 L449.5 145"/><path d="M447 144 L452 143.4 L450.5 147.6 Z"/>
<path d="M449.8 173 L444.5 152"/><path d="M443.7 149.5 L447 153.3 L442.7 154 Z"/>
<path d="M440 209 L428 200.8"/><path d="M425.6 199.2 L430.8 200 L428.2 203.7 Z"/>
<path d="M428 241.5 L414.4 232.8"/><path d="M412 231.2 L417.2 232 L414.7 235.7 Z"/>
<path d="M414 289 L395.5 285.8"/><path d="M393 285.4 L397.6 283.5 L397 287.8 Z"/>
<path d="M401.5 309.5 L388.2 300.6"/><path d="M386 299 L391.1 299.9 L388.6 303.6 Z"/>
<path d="M362.5 294.5 L372.8 307.8"/><path d="M374.6 310.3 L370.2 307.6 L373.8 305 Z"/>
</g>
</g>
</svg>

<!-- BOXES -->
<div class="bx" style="left:352px;top:91.5px;width:74px;height:25px">Weasenham Lane<br>Now: Hand operated gates<br>Reopening: AHB</div>
<div class="bx" style="left:354px;top:130.3px;width:70.2px;height:26px">New Bridge<br>Now: Automatic open<br>Reopening: AHB</div>
<div class="bx" style="left:461.4px;top:137.2px;width:80.4px;height:25.5px">A47 Bypass<br>Now: Automatic open<br>Reopening: Full barrier + CCTV?</div>
<div class="bx" style="left:445.4px;top:173.4px;width:60.4px;height:26px">Redmoor Lane<br>Now: Automatic open<br>Reopening: AHB</div>
<div class="bx" style="left:441.1px;top:208.5px;width:70.5px;height:26px">Waldersey<br>Now: Hand operated gates<br>Reopening: AHB</div>
<div class="bx" style="left:428.2px;top:240.2px;width:71.1px;height:26px">Coldham<br>Now: Hand operated gates<br>Reopening: AHB</div>
<div class="bx" style="left:414.5px;top:275.5px;width:54px;height:25px">Chainbridge<br>Now: AHB<br>Reopening: AHB</div>
<div class="bx" style="left:401.6px;top:310.2px;width:46px;height:25px">Elm Road<br>Now: AHB<br>Reopening: AHB</div>
<div class="bx big" style="left:446.3px;top:89.5px;width:50px;height:19.2px;font-size:11px"><span style="display:inline-block;transform:scaleX(0.875)">Wisbech</span></div>
<div class="bx big" style="left:339.4px;top:335.5px;width:45.4px;height:18.8px;font-size:10.4px"><span style="display:inline-block;transform:scaleX(0.95)">March</span></div>
<!-- whitemoor selection -->
<svg class="a" style="left:315px;top:252px" width="60" height="52" viewBox="315 252 60 52">
<rect x="323.3" y="278.3" width="39.2" height="20.4" fill="rgba(240,238,234,0.85)" stroke="#3a3a3a" stroke-width="1.1"/>
<g fill="#fff" stroke="#4a4a4a" stroke-width="1">
<circle cx="323.3" cy="278.3" r="2.3"/><circle cx="342.9" cy="278.3" r="2.3"/><circle cx="362.5" cy="278.3" r="2.3"/>
<circle cx="323.3" cy="288.5" r="2.3"/><circle cx="362.5" cy="288.5" r="2.3"/>
<circle cx="323.3" cy="298.7" r="2.3"/><circle cx="342.9" cy="298.7" r="2.3"/><circle cx="362.5" cy="298.7" r="2.3"/>
</g>
<circle cx="342.9" cy="259.8" r="3.3" fill="none" stroke="#3a3a3a" stroke-width="1.2" stroke-dasharray="17 4" stroke-dashoffset="-1"/>
<path d="M345 259.2 L346.8 261.2 L348.3 259" fill="none" stroke="#3a3a3a" stroke-width="1"/><circle cx="342.9" cy="259.8" r="1.3" fill="none" stroke="#666" stroke-width="0.7"/>
<path d="M328 287.6 L357 287.6" stroke="#e0a0a0" stroke-width="0.6"/>
</svg>
<div class="t" style="left:327.8px;top:281.3px;font-size:6.1px;color:#4a1a1a;-webkit-text-stroke:0.2px #4a1a1a">Whitemoor</div>
<div class="t" style="left:332px;top:289.5px;font-size:5.9px;color:#1a2626;-webkit-text-stroke:0.2px #1a2626">Junction</div>


<div class="t" style="left:122px;top:411px;font-size:7.2px;color:#d4d2d6">Click to add notes</div>
</body></html>
